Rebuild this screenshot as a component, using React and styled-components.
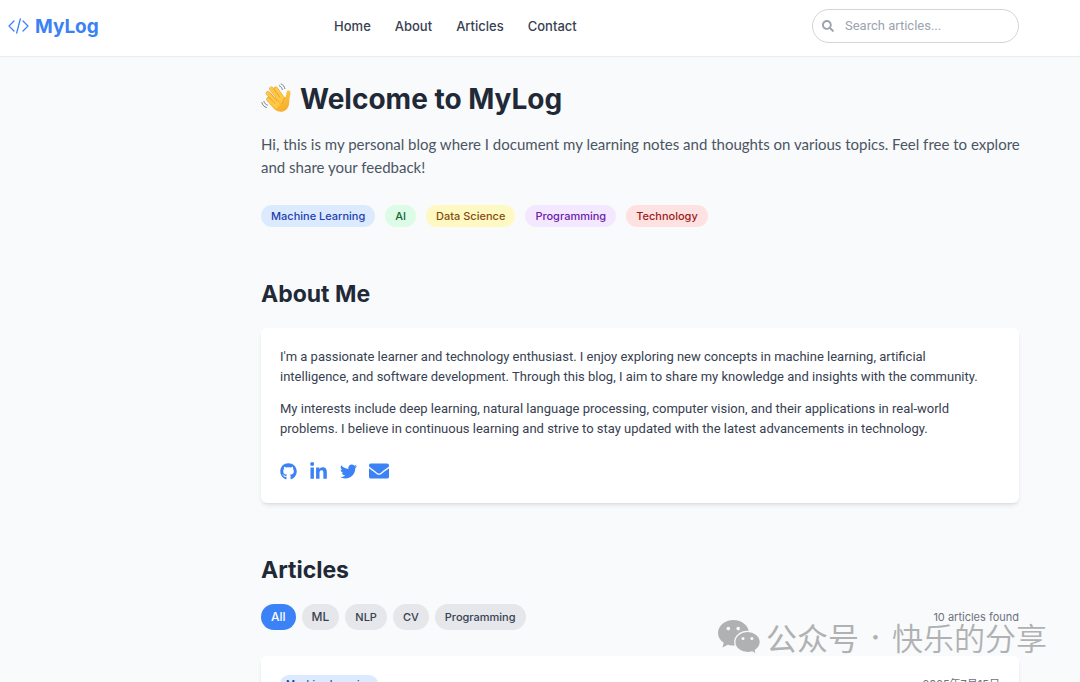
import React from "react";
import styled, { createGlobalStyle, css } from "styled-components";
import { FaSearch, FaGithub, FaLinkedinIn, FaTwitter, FaEnvelope } from "react-icons/fa";

const GlobalStyle = createGlobalStyle`
  *, *::before, *::after { box-sizing: border-box; }
  body {
    margin: 0;
    background: #f9fafb;
    color: #1f2937;
    font-family: Inter, "Noto Sans CJK SC", sans-serif;
    -webkit-font-smoothing: antialiased;
  }
  h1, h2, p { margin: 0; }
  a { color: inherit; text-decoration: none; }
`;

const Page = styled.div`
  position: relative;
  height: 100vh;
  overflow: hidden;
`;

const Header = styled.header`
  display: flex;
  align-items: center;
  justify-content: space-between;
  padding: 9px 61px 13px 8px;
  background: #fff;
  border-bottom: 1px solid #ececee;
`;

const Logo = styled.a`
  display: flex;
  align-items: center;
  gap: 6px;
  color: #3b82f6;
  font-size: 19px;
  font-weight: 700;
  line-height: 29px;
`;

const Nav = styled.nav`
  display: flex;
  gap: 24px;
  color: #374151;
  font-size: 13px;
  font-weight: 500;
  line-height: 20px;
`;

const SearchBox = styled.label`
  display: flex;
  align-items: center;
  gap: 11px;
  width: 207px;
  height: 34px;
  padding: 0 9px;
  border: 1px solid #d1d5db;
  border-radius: 17px;
  color: #9ca3af;
  font-size: 12px;
`;

const SearchInput = styled.input`
  flex: 1;
  min-width: 0;
  padding: 0;
  border: 0;
  outline: 0;
  background: transparent;
  color: #374151;
  font: 400 13px/20px Roboto, sans-serif;
  &::placeholder { color: #9ca3af; opacity: 1; }
`;

const Main = styled.main`
  display: flex;
  flex-direction: column;
  gap: 50px;
  padding: 22px 61px 0 261px;
`;

const Section = styled.section`
  display: flex;
  flex-direction: column;
`;

const Title = styled.h1`
  display: flex;
  align-items: center;
  gap: 8px;
  margin-bottom: 14px;
  font-size: 28px;
  font-weight: 700;
  line-height: 40px;
`;

const Intro = styled.p`
  margin: 0 -12px 26px 0;
  color: #4b5563;
  font-family: Lato, sans-serif;
  font-size: 15px;
  line-height: 23px;
`;

const Tags = styled.div`
  display: flex;
  gap: 10px;
`;

const tones = {
  blue: css`background: #dbeafe; color: #1e40af;`,
  green: css`background: #dcfce7; color: #166534;`,
  yellow: css`background: #fef9c3; color: #854d0e;`,
  purple: css`background: #f3e8ff; color: #6b21a8;`,
  red: css`background: #fee2e2; color: #991b1b;`,
};

const Tag = styled.span`
  padding: 0 ${(p) => (p.$small ? 6 : 10)}px;
  border-radius: 11px;
  font-size: ${(p) => (p.$small ? 10 : 11)}px;
  font-weight: 500;
  line-height: ${(p) => (p.$small ? 18 : 22)}px;
  ${(p) => tones[p.$tone]}
`;

const Heading = styled.h2`
  margin-bottom: 17px;
  font-size: 23px;
  font-weight: 700;
  line-height: 34px;
`;

const Card = styled.article`
  padding: 19px 19px 20px;
  border-radius: 6px;
  background: #fff;
  box-shadow: 0 3px 5px -1px rgba(0, 0, 0, 0.1), 0 2px 3px -2px rgba(0, 0, 0, 0.1);
`;

const Paragraph = styled.p`
  margin-bottom: 12px;
  padding-right: 8px;
  color: #374151;
  font-family: Roboto, sans-serif;
  font-size: 13px;
  line-height: 20px;
`;

const Socials = styled.div`
  display: flex;
  align-items: center;
  gap: 12px;
  padding-top: 8px;
  color: #3b82f6;
`;

const SocialLink = styled.a`
  display: flex;
  align-items: center;
  height: 24px;
  font-size: ${(p) => p.$size}px;
`;

const Toolbar = styled.div`
  display: flex;
  align-items: center;
  justify-content: space-between;
  margin-bottom: 26px;
`;

const Filters = styled.div`
  display: flex;
  gap: 6px;
`;

const FilterButton = styled.button`
  padding: 0 10px;
  border: 0;
  border-radius: 13px;
  background: ${(p) => (p.$active ? "#3b82f6" : "#e5e7eb")};
  color: ${(p) => (p.$active ? "#fff" : "#374151")};
  font: 500 ${(p) => (p.$large ? 12 : 11)}px/26px Inter, sans-serif;
`;

const Count = styled.span`
  color: #6b7280;
  font-size: 11px;
  line-height: 16px;
`;

const ArticleMeta = styled.div`
  display: flex;
  align-items: center;
  justify-content: space-between;
  margin-bottom: 12px;
`;

const ArticleDate = styled.time`
  color: #6b7280;
  font-size: 11px;
  line-height: 16px;
`;

const Watermark = styled.div`
  position: absolute;
  right: 33px;
  bottom: 23px;
  display: flex;
  align-items: center;
  color: #b0b1b3;
  font-family: "Noto Sans CJK SC", sans-serif;
  font-size: 31px;
  line-height: 44px;
  pointer-events: none;
`;

const WatermarkLabel = styled.span`
  margin-left: 5px;
  font-weight: 400;
`;

const WatermarkDot = styled.span`
  width: 33px;
  text-align: center;
  font-family: Inter, sans-serif;
  font-weight: 500;
`;

const WatermarkName = styled.span`
  font-weight: 350;
`;

function CodeIcon() {
  return (
    <svg width="21" height="16" viewBox="0 0 21 16" fill="none" stroke="currentColor" strokeWidth="1.3" strokeLinecap="round" strokeLinejoin="round" aria-hidden="true">
      <path d="M6 3 1 8l5 5M15 3l5 5-5 5M12.3 1 8.7 15" />
    </svg>
  );
}

function WaveIcon() {
  return (
    <svg width="31" height="32" viewBox="0 0 31 32" fill="none" strokeLinecap="round" aria-hidden="true">
      <defs>
        <linearGradient id="skin" x1="10" y1="6" x2="21" y2="30" gradientUnits="userSpaceOnUse">
          <stop stopColor="#ffd04a" />
          <stop offset="1" stopColor="#f8ab2c" />
        </linearGradient>
      </defs>
      <g stroke="#e8a031">
        <path d="m14.800 5.800 6.400 9M10.200 5.600l9 11.400M6.800 10.200l9.200 10M7.300 16.300l7 7" strokeWidth="4.200" />
      </g>
      <path d="M14 14 21 11.500l3.400 3.200c.9-1.800.7-4 1.300-6 .6-1.900 3.600-1.600 3.700.6.200 2.600-.9 4.800-1 7.200-.2 4.200-.2 7.300-3 9.900-3.200 3-7.800 3.100-11.400.4L8.500 21Z" fill="url(#skin)" />
      <g stroke="#ffc845" strokeWidth="3.300">
        <path d="m14.800 5.800 7 10" />
        <path d="m10.200 5.600 10 12.400" />
        <path d="m6.800 10.200 10.500 11.500" />
        <path d="m7.300 16.300 8 7.500" />
      </g>
      <path d="m12.700 6.100 6 8M9 9.700l7.300 8.400M7.600 13.900l6.300 6.500" stroke="#dd9428" strokeWidth=".7" />
      <path d="M24.400 14.700c-2 1.300-3.100 3.200-2.700 5.500" stroke="#e19a2a" strokeWidth=".8" />
      <path d="M18.300 2.700c1.600.7 2.600 2.100 3 3.900M20.200.9c2 .9 3.200 2.600 3.600 4.700M.9 19.600c.6 2.500 2.200 4.200 4.500 4.900M2.900 18.400c.5 1.900 1.800 3.200 3.600 3.800" stroke="#6b7075" strokeWidth=".9" />
    </svg>
  );
}

function WeChatIcon() {
  return (
    <svg width="43" height="36" viewBox="0 0 43 36" aria-hidden="true">
      <path fill="currentColor" d="M15.500 1C7 1 0 6.700 0 14c0 4 2.200 7.500 5.700 9.800L4.500 28.500l5.300-2.800c1.800.6 3.700.9 5.700.9C24 26.600 31 21 31 14S24 1 15.500 1Z" />
      <path fill="currentColor" stroke="#f9fafb" strokeWidth="1.300" d="M29.500 12.300c-7 0-12.700 4.800-12.700 10.700s5.700 10.700 12.700 10.700c1.700 0 3.300-.3 4.700-.8l4.300 2.300-1.100-3.900c3-2 4.900-5 4.900-8.300 0-5.900-5.800-10.700-12.800-10.700Z" />
      <g fill="#f9fafb">
        <circle cx="10.300" cy="9.600" r="1.800" />
        <circle cx="20.200" cy="9.600" r="1.800" />
        <circle cx="25" cy="19.600" r="1.500" />
        <circle cx="33.900" cy="19.600" r="1.500" />
      </g>
    </svg>
  );
}

const tags = [
  ["Machine Learning", "blue"],
  ["AI", "green"],
  ["Data Science", "yellow"],
  ["Programming", "purple"],
  ["Technology", "red"],
];

const filters = ["All", "ML", "NLP", "CV", "Programming"];

export default function App() {
  return (
    <Page>
      <GlobalStyle />
      <Header>
        <Logo href="#home"><CodeIcon />MyLog</Logo>
        <Nav>
          <a href="#home">Home</a>
          <a href="#about">About</a>
          <a href="#articles">Articles</a>
          <a href="#contact">Contact</a>
        </Nav>
        <SearchBox>
          <FaSearch aria-hidden="true" />
          <SearchInput type="search" placeholder="Search articles..." aria-label="Search articles" />
        </SearchBox>
      </Header>
      <Main>
        <Section id="home">
          <Title><WaveIcon />Welcome to MyLog</Title>
          <Intro>
            Hi, this is my personal blog where I document my learning notes and thoughts on various topics. Feel free to explore and share your feedback!
          </Intro>
          <Tags>
            {tags.map(([name, tone]) => <Tag key={name} $tone={tone}>{name}</Tag>)}
          </Tags>
        </Section>
        <Section id="about">
          <Heading>About Me</Heading>
          <Card>
            <Paragraph>
              I'm a passionate learner and technology enthusiast. I enjoy exploring new concepts in machine learning, artificial intelligence, and software development. Through this blog, I aim to share my knowledge and insights with the community.
            </Paragraph>
            <Paragraph>
              My interests include deep learning, natural language processing, computer vision, and their applications in real-world problems. I believe in continuous learning and strive to stay updated with the latest advancements in technology.
            </Paragraph>
            <Socials>
              <SocialLink href="#github" aria-label="GitHub" $size={17}><FaGithub /></SocialLink>
              <SocialLink href="#linkedin" aria-label="LinkedIn" $size={19}><FaLinkedinIn /></SocialLink>
              <SocialLink href="#twitter" aria-label="Twitter" $size={17}><FaTwitter /></SocialLink>
              <SocialLink href="#email" aria-label="Email" $size={20}><FaEnvelope /></SocialLink>
            </Socials>
          </Card>
        </Section>
        <Section id="articles">
          <Heading>Articles</Heading>
          <Toolbar>
            <Filters>
              {filters.map((name, i) => (
                <FilterButton key={name} type="button" $active={i === 0} $large={i < 2}>{name}</FilterButton>
              ))}
            </Filters>
            <Count>10 articles found</Count>
          </Toolbar>
          <Card>
            <ArticleMeta>
              <Tag $small $tone="blue">Machine Learning</Tag>
              <ArticleDate dateTime="2025-07-15">2025年7月15日</ArticleDate>
            </ArticleMeta>
          </Card>
        </Section>
      </Main>
      <Watermark>
        <WeChatIcon />
        <WatermarkLabel>公众号</WatermarkLabel>
        <WatermarkDot>·</WatermarkDot>
        <WatermarkName>快乐的分享</WatermarkName>
      </Watermark>
    </Page>
  );
}
